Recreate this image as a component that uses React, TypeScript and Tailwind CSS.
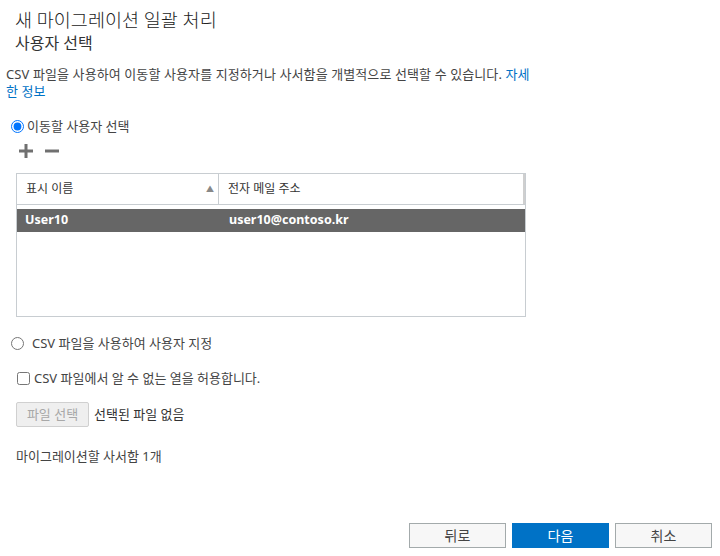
import { useState } from 'react';

const font = { fontFamily: '"Segoe UI", "Noto Sans", "Noto Sans CJK KR", sans-serif' };

const users = [{ name: 'User10', email: 'user10@contoso.kr' }];

function PlusIcon() {
  return (
    <svg width="16" height="16" viewBox="0 0 16 16">
      <path d="M8 1v14M1 8h14" stroke="#707070" strokeWidth="3" />
    </svg>
  );
}

function MinusIcon() {
  return (
    <svg width="16" height="16" viewBox="0 0 16 16">
      <path d="M1 8h14" stroke="#707070" strokeWidth="3" />
    </svg>
  );
}

export default function App() {
  const [mode, setMode] = useState<'pick' | 'csv'>('pick');
  const [allowUnknown, setAllowUnknown] = useState(false);

  return (
    <div className="w-[720px] h-[556px] flex flex-col bg-white text-[#333]" style={font}>
      <div className="pl-[15px] pt-[6px]">
        <h1 className="text-[18.5px] leading-[27px] font-light text-[#222]">새 마이그레이션 일괄 처리</h1>
        <h2 className="text-[16px] leading-[20px] font-normal text-[#333]">사용자 선택</h2>
      </div>

      <p className="ml-[6px] mt-[13px] text-[13px] leading-[17px] tracking-[0.1px] text-[#444]">
        CSV 파일을 사용하여 이동할 사용자를 지정하거나 사서함을 개별적으로 선택할 수 있습니다.{' '}
        <a href="#" className="text-[#0072c6] leading-[17px]">
          자세
          <br />한 정보
        </a>
      </p>

      <label className="flex items-center ml-[11px] mt-[18px] text-[13px] leading-[17px] text-[#444]">
        <input
          type="radio"
          name="mode"
          checked={mode === 'pick'}
          onChange={() => setMode('pick')}
          className="m-0 w-[13px] h-[13px] accent-[#0075ff]"
        />
        <span className="ml-[3px]">이동할 사용자 선택</span>
      </label>

      <div className="flex items-center gap-[10px] ml-[18px] mt-[8px]">
        <PlusIcon />
        <MinusIcon />
      </div>

      <div className="ml-[16px] mt-[14px] w-[510px] h-[144px] border border-[#c8cdd1]">
        <div className="flex h-[31px] border-b border-[#c8cdd1] text-[12px]">
          <div className="w-[202px] flex items-center justify-between pl-[9px] pr-[4px] border-r border-[#c8cdd1]">
            <span>표시 이름</span>
            <span className="text-[8px] text-[#888]">▲</span>
          </div>
          <div className="flex-1 flex items-center pl-[9px]">전자 메일 주소</div>
          <div className="w-[2px] bg-[#cfcfcf]" />
        </div>
        <div className="mt-[4px]">
          {users.map((u) => (
            <div key={u.email} className="flex h-[23px] items-center bg-[#666666] text-white font-bold text-[12.5px]">
              <div className="w-[203px] pl-[8px]">{u.name}</div>
              <div className="flex-1 pl-[9px]">{u.email}</div>
            </div>
          ))}
        </div>
      </div>

      <label className="flex items-center ml-[11px] mt-[18px] text-[13px] leading-[17px] text-[#444]">
        <input
          type="radio"
          name="mode"
          checked={mode === 'csv'}
          onChange={() => setMode('csv')}
          className="m-0 w-[13px] h-[13px] accent-[#0075ff]"
        />
        <span className="ml-[8px]">CSV 파일을 사용하여 사용자 지정</span>
      </label>

      <label className="flex items-center ml-[17px] mt-[18px] text-[13px] leading-[17px] text-[#444]">
        <input
          type="checkbox"
          checked={allowUnknown}
          onChange={(e) => setAllowUnknown(e.target.checked)}
          className="m-0 w-[13px] h-[13px]"
        />
        <span className="ml-[4px]">CSV 파일에서 알 수 없는 열을 허용합니다.</span>
      </label>

      <div className="flex items-center ml-[16px] mt-[15px] text-[13px]">
        <button
          disabled
          className="h-[25px] w-[73px] rounded-[2px] border border-[#d0d0d0] bg-[#efefef] text-[#a8a8a8] text-[13px]"
        >
          파일 선택
        </button>
        <span className="ml-[5px] text-[#333]">선택된 파일 없음</span>
      </div>

      <p className="ml-[16px] mt-[21px] text-[13px] leading-[17px] text-[#444]">마이그레이션할 사서함 1개</p>

      <div className="mt-auto mb-[8px] mr-[8px] flex justify-end gap-[6px]">
        <button className="w-[97px] h-[25px] border border-[#a3aaab] bg-[#f7f7f7] text-[14px] text-[#444]">뒤로</button>
        <button className="w-[97px] h-[25px] bg-[#0072c6] text-[14px] text-white">다음</button>
        <button className="w-[97px] h-[25px] border border-[#a3aaab] bg-[#f7f7f7] text-[14px] text-[#444]">취소</button>
      </div>
    </div>
  );
}
